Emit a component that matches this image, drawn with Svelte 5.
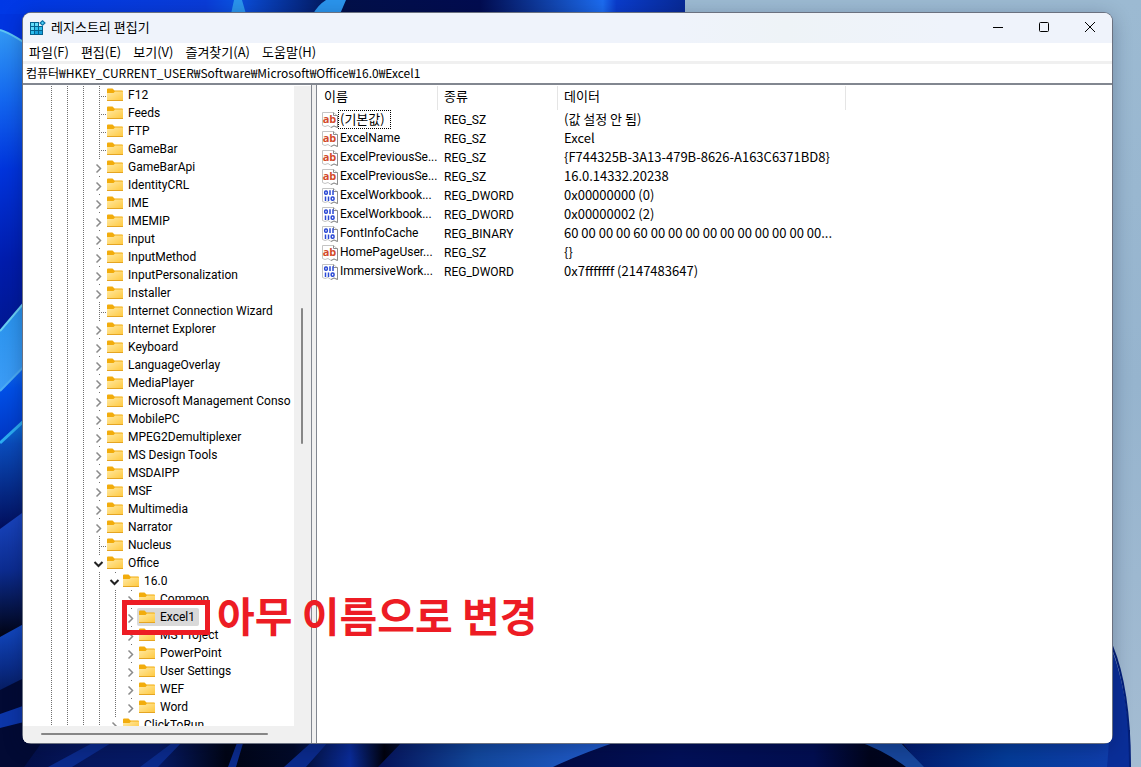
<script lang="ts">
  type Kind = 'leaf' | 'closed' | 'open';
  type TreeKey = { name: string; level: number; kind: Kind; selected?: boolean };
  type Value = { name: string; type: string; data: string };

  const key = (name: string, level = 0, kind: Kind = 'closed', selected = false): TreeKey => ({ name, level, kind, selected });

  const keys: TreeKey[] = [
    key('F12', 0, 'leaf'),
    key('Feeds', 0, 'leaf'),
    key('FTP', 0, 'leaf'),
    key('GameBar', 0, 'leaf'),
    key('GameBarApi'),
    key('IdentityCRL'),
    key('IME'),
    key('IMEMIP'),
    key('input'),
    key('InputMethod'),
    key('InputPersonalization'),
    key('Installer'),
    key('Internet Connection Wizard', 0, 'leaf'),
    key('Internet Explorer'),
    key('Keyboard'),
    key('LanguageOverlay'),
    key('MediaPlayer'),
    key('Microsoft Management Conso'),
    key('MobilePC'),
    key('MPEG2Demultiplexer'),
    key('MS Design Tools'),
    key('MSDAIPP'),
    key('MSF'),
    key('Multimedia'),
    key('Narrator'),
    key('Nucleus', 0, 'leaf'),
    key('Office', 0, 'open'),
    key('16.0', 1, 'open'),
    key('Common', 2),
    key('Excel1', 2, 'closed', true),
    key('MS Project', 2),
    key('PowerPoint', 2),
    key('User Settings', 2),
    key('WEF', 2),
    key('Word', 2),
    key('ClickToRun', 1)
  ];

  const values: Value[] = [
    { name: '(기본값)', type: 'REG_SZ', data: '(값 설정 안 됨)' },
    { name: 'ExcelName', type: 'REG_SZ', data: 'Excel' },
    { name: 'ExcelPreviousSe...', type: 'REG_SZ', data: '{F744325B-3A13-479B-8626-A163C6371BD8}' },
    { name: 'ExcelPreviousSe...', type: 'REG_SZ', data: '16.0.14332.20238' },
    { name: 'ExcelWorkbook...', type: 'REG_DWORD', data: '0x00000000 (0)' },
    { name: 'ExcelWorkbook...', type: 'REG_DWORD', data: '0x00000002 (2)' },
    { name: 'FontInfoCache', type: 'REG_BINARY', data: '60 00 00 00 60 00 00 00 00 00 00 00 00 00 00...' },
    { name: 'HomePageUser...', type: 'REG_SZ', data: '{}' },
    { name: 'ImmersiveWork...', type: 'REG_DWORD', data: '0x7fffffff (2147483647)' }
  ];

  const menus = ['파일(F)', '편집(E)', '보기(V)', '즐겨찾기(A)', '도움말(H)'];
  const hangul = (text: string) => /[가-힣]/.test(text);
  let path = $state('컴퓨터₩HKEY_CURRENT_USER₩Software₩Microsoft₩Office₩16.0₩Excel1');
</script>

<div class="desktop">
  <svg class="wallpaper" viewBox="0 0 1141 767" preserveAspectRatio="none" aria-hidden="true">
    <defs>
      <linearGradient id="sky" x1="0" y1="0" x2="0" y2="1">
        <stop offset="0" stop-color="#9cbad2" /><stop offset="0.5" stop-color="#96b4ce" /><stop offset="1" stop-color="#a4bcd2" />
      </linearGradient>
      <linearGradient id="top" x1="0" y1="0" x2="1" y2="0">
        <stop offset="0" stop-color="#0038e6" /><stop offset="0.3" stop-color="#0a3cd8" /><stop offset="0.34" stop-color="#0a50e0" /><stop offset="0.36" stop-color="#0a4ad2" />
        <stop offset="0.5" stop-color="#02104a" /><stop offset="0.7" stop-color="#020c50" /><stop offset="0.88" stop-color="#1c6cf0" /><stop offset="0.9" stop-color="#0a3ccc" /><stop offset="1" stop-color="#082a96" />
      </linearGradient>
      <linearGradient id="petal" x1="0" y1="0" x2="0" y2="1">
        <stop offset="0" stop-color="#3298f4" /><stop offset="0.22" stop-color="#1468f0" /><stop offset="0.45" stop-color="#0034dc" /><stop offset="0.75" stop-color="#001cac" /><stop offset="1" stop-color="#001890" />
      </linearGradient>
      <linearGradient id="fold" x1="0" y1="0" x2="0" y2="1">
        <stop offset="0" stop-color="#2490ea" /><stop offset="1" stop-color="#3c9cf6" />
      </linearGradient>
      <linearGradient id="fold2" x1="0" y1="0" x2="0" y2="1">
        <stop offset="0" stop-color="#1c7ef0" /><stop offset="0.4" stop-color="#0050e8" /><stop offset="1" stop-color="#0034c0" />
      </linearGradient>
      <linearGradient id="fold3" x1="0" y1="0" x2="0" y2="1">
        <stop offset="0" stop-color="#0c8cf0" /><stop offset="0.3" stop-color="#0a4cbc" /><stop offset="1" stop-color="#020c58" />
      </linearGradient>
      <linearGradient id="fold4" x1="0" y1="0" x2="0" y2="1">
        <stop offset="0" stop-color="#1c4ccc" /><stop offset="0.5" stop-color="#0c2c90" /><stop offset="1" stop-color="#01020e" />
      </linearGradient>
      <linearGradient id="fold5" x1="0" y1="0" x2="0" y2="1">
        <stop offset="0" stop-color="#1450d0" /><stop offset="0.5" stop-color="#0a2c88" /><stop offset="1" stop-color="#020a30" />
      </linearGradient>
      <linearGradient id="floor" x1="0" y1="0" x2="1" y2="0">
        <stop offset="0" stop-color="#020c40" /><stop offset="0.08" stop-color="#061860" /><stop offset="0.14" stop-color="#061a66" /><stop offset="0.2" stop-color="#010514" />
        <stop offset="0.26" stop-color="#020a28" /><stop offset="0.31" stop-color="#0a2c98" /><stop offset="0.34" stop-color="#01020c" /><stop offset="0.4" stop-color="#0c2c90" />
        <stop offset="0.42" stop-color="#020838" /><stop offset="0.6" stop-color="#021058" /><stop offset="0.72" stop-color="#020e50" /><stop offset="0.77" stop-color="#01041a" /><stop offset="1" stop-color="#020c48" />
      </linearGradient>
      <linearGradient id="band" x1="0" y1="0" x2="1" y2="0">
        <stop offset="0" stop-color="#051258" /><stop offset="0.4" stop-color="#12489c" /><stop offset="1" stop-color="#2460d4" />
      </linearGradient>
      <linearGradient id="right" x1="0" y1="0" x2="1" y2="0">
        <stop offset="0" stop-color="#021a6c" /><stop offset="0.5" stop-color="#043c98" /><stop offset="1" stop-color="#103eac" />
      </linearGradient>
    </defs>
    <rect width="1141" height="767" fill="url(#sky)" />
    <rect width="685" height="40" fill="url(#top)" />
    <path d="M234 0 L231 14 L246 14 L242 0Z M326 0 Q318 5 313 14 L340 14 L346 0Z" fill="#2a94ec" />
    <path d="M0 14 H40 V767 H0Z" fill="#0034e0" />
    <path d="M0 30 Q14 34 40 54 V340 H0Z" fill="url(#petal)" />
    <path d="M0 30 Q14 34 40 54" stroke="#5cc4f4" stroke-width="2" fill="none" />
    <path d="M0 331 L40 284 V366 L0 392Z" fill="url(#fold)" />
    <path d="M0 331 L40 284" stroke="#6ad0f4" stroke-width="2" />
    <path d="M0 391 L40 350 V410 L0 446Z" fill="url(#fold2)" />
    <path d="M0 391 L40 350" stroke="#4cacf4" stroke-width="2" />
    <path d="M0 443 L40 406 V510 L0 532Z" fill="url(#fold3)" />
    <path d="M0 443 L40 406" stroke="#2cacf0" stroke-width="3" />
    <path d="M0 529 L40 500 V640 H0Z" fill="url(#fold4)" />
    <rect y="730" width="1130" height="37" fill="url(#floor)" />
    <path d="M0 637 L40 615 V720 H0Z" fill="url(#fold5)" />
    <path d="M0 690 L40 670 V745 L24 767 H0Z" fill="#020a34" />
    <path d="M0 714 L40 700 V718 L0 728Z" fill="#0c36a8" />
    <path d="M48 767 L98 740 H116 L72 767Z M140 767 L176 740 H184 L158 767Z M228 767 L238 740 H244 L236 767Z M284 767 L314 740 H330 L306 767Z" fill="#0b2b8c" />
    <path d="M553 767 Q580 754 622 740 H404 L378 767Z" fill="url(#band)" />
    <path d="M900 740 H1114 V767 H922Z" fill="url(#right)" />
    <path d="M854 740 L898 740 L924 767 L906 767 Q884 750 854 740Z" fill="#17479c" />
    <path d="M1108 640 Q1130 690 1130 767 H1107 Q1112 720 1108 640Z" fill="#0a2e98" />
    <path d="M1112 646 Q1130 690 1130 767" stroke="#04207a" stroke-width="2" fill="none" />
  </svg>

  <main class="window">
    <header class="titlebar">
      <svg class="app-icon" viewBox="0 0 16 16" aria-hidden="true">
        <path d="M0 2h13v13H0z" fill="#05628f" />
        <path d="M1 3h3v3H1z M5 3h3v3H5z M1 7h3v3H1z" fill="#62dcfa" />
        <path d="M5 7h3v3H5z M9 7h3v3H9z M1 11h3v3H1z" fill="#30c0ee" />
        <path d="M5 11h3v3H5z M9 11h3v3H9z" fill="#16a0dc" />
        <path d="M9 0h7v6H9z" fill="#eff3fb" />
        <path d="M12.500 0 15.800 3 12.500 6 9.200 3z" fill="#0b6fa4" />
        <path d="M12.500 1.500 14 3 12.500 4.500 11 3z" fill="#4cd0f6" />
      </svg>
      <h1>레지스트리 편집기</h1>
      <div class="controls">
        <button aria-label="최소화"><svg viewBox="0 0 10 10"><path d="M0 5.500H10" /></svg></button>
        <button aria-label="최대화"><svg viewBox="0 0 10 10"><rect x="0.500" y="0.500" width="9" height="9" rx="1" /></svg></button>
        <button aria-label="닫기"><svg viewBox="0 0 10 10"><path d="M0 0 10 10M10 0 0 10" /></svg></button>
      </div>
    </header>

    <nav class="menubar">
      {#each menus as menu}
        <button>{menu}</button>
      {/each}
    </nav>

    <input class="address" aria-label="주소" bind:value={path} spellcheck="false" />

    <div class="panes">
      <section class="tree-pane">
        <div class="tree-row">
          <ul class="tree">
            {#each keys as item}
              <li>
                {#each { length: 3 + item.level } as _}
                  <span class="cell guide"></span>
                {/each}
                {#if item.kind === 'leaf'}
                  <span class="cell guide branch"></span>
                {:else}
                  <button class="cell toggle" class:open={item.kind === 'open'} aria-label={item.name + ' 확장'}>
                    <svg viewBox="0 0 16 18">
                      <path d={item.kind === 'open' ? 'M3.500 8 7.500 12 11.500 8' : 'M5.500 6.500 9.500 10.500 5.500 14.500'} />
                    </svg>
                  </button>
                {/if}
                <button class="key" class:selected={item.selected}>
                  <svg viewBox="0 0 16 14" aria-hidden="true">
                    <path d="M0 1.500Q0 0.500 1 0.500H5.500L7.500 2.500H15Q16 2.500 16 3.500V12H0Z" fill="#f2ac0c" />
                    <path d="M0 5H6.500L8 3.500H16V12Q16 13 15 13H1Q0 13 0 12Z" fill="url(#folder)" />
                    <path d="M0 12.500H16" stroke="#e5a522" />
                  </svg>
                  <span>{item.name}</span>
                </button>
              </li>
            {/each}
          </ul>
          <div class="vscroll"><i></i></div>
        </div>
        <div class="hscroll"><i></i></div>
      </section>

      <section class="list-pane">
        <table>
          <colgroup><col class="c-name" /><col class="c-type" /><col class="c-data" /><col /></colgroup>
          <thead>
            <tr><th>이름</th><th>종류</th><th>데이터</th><td></td></tr>
          </thead>
          <tbody>
            {#each values as value, i}
              <tr>
                <td class="name">
                  <div>
                    <svg viewBox="0 0 16 16" aria-hidden="true">
                      <path d="M0.500 0.500H11.500L15.500 4V15.500L12 14 9 15.500 6 13.500 3 14.500 0.500 13.500Z" fill="#fff" stroke="#c4c4c4" />
                      <path d="M11.500 0.500V3.500H15.500V15.500L12 14 9 15.500" fill="none" stroke="#8e8e8e" />
                      {#if value.type === 'REG_SZ'}
                        <text x="7.500" y="11" text-anchor="middle" class="ab">ab</text>
                      {:else}
                        <g fill="none" stroke="#2a48d4" stroke-width="1.500">
                          <rect x="2.700" y="3" width="2.600" height="3.200" rx="1" />
                          <path d="M8 2.200V7M11 2.200V7M3.500 8.500V13M6.500 8.500V13" />
                          <rect x="9.200" y="9" width="2.800" height="3.200" rx="1" />
                        </g>
                      {/if}
                    </svg>
                    <span class:wide={hangul(value.name)} class:focused={i === 0}>{value.name}</span>
                  </div>
                </td>
                <td>{value.type}</td>
                <td class="wide">{value.data}</td>
                <td></td>
              </tr>
            {/each}
          </tbody>
        </table>
      </section>
    </div>

    <div class="callout">
      <span class="frame"></span>
      <strong>아무 이름으로 변경</strong>
    </div>
  </main>

  <svg class="defs" aria-hidden="true">
    <linearGradient id="folder" x1="0" y1="0" x2="1" y2="1">
      <stop offset="0" stop-color="#ffe9a4" /><stop offset="1" stop-color="#ffc83c" />
    </linearGradient>
  </svg>
</div>

<style>
  :global(body) {
    margin: 0;
  }

  .desktop {
    position: relative;
    display: flex;
    box-sizing: border-box;
    height: 100vh;
    padding: 13px 29px 24px 23px;
    overflow: hidden;
    font-family: 'Noto Sans CJK KR', sans-serif;
    font-size: 13px;
    line-height: 18px;
    color: #000;
  }

  .wallpaper {
    position: absolute;
    inset: 0;
    width: 100%;
    height: 100%;
  }

  .defs {
    position: absolute;
    width: 0;
    height: 0;
  }

  .window {
    position: relative;
    display: flex;
    flex: 1;
    flex-direction: column;
    min-width: 0;
    border-radius: 8px;
    background: #fff;
    box-shadow: 0 0 0 1px #6b7180, 0 4px 20px rgba(0, 10, 40, 0.3);
  }

  button {
    padding: 0;
    border: 0;
    background: none;
    color: inherit;
    font: inherit;
    white-space: nowrap;
  }

  .titlebar {
    display: flex;
    align-items: center;
    height: 30px;
    padding-left: 7px;
    border-radius: 8px 8px 0 0;
    background: linear-gradient(90deg, #eff3fb 0 60%, #eef3f7 70%, #eff3fb 85%);
  }

  .app-icon {
    width: 16px;
    height: 16px;
  }

  h1 {
    flex: 1;
    margin: 0 0 2px 5px;
    font-size: 13px;
    font-weight: 400;
  }

  .controls {
    display: flex;
    margin: 0 -1px 2px 0;
  }

  .controls button {
    display: grid;
    place-items: center;
    width: 46px;
    height: 28px;
  }

  .controls svg {
    width: 10px;
    height: 10px;
    overflow: visible;
    fill: none;
    stroke: #000;
  }

  .menubar {
    display: flex;
    gap: 12px;
    height: 18px;
    padding: 0 6px;
  }

  .address {
    box-sizing: border-box;
    height: 24px;
    padding: 0 3px 2px;
    border: 0;
    border-top: 3px solid #f0f0f0;
    border-bottom: 2px solid #828790;
    background: #fff;
    color: inherit;
    font: inherit;
    font-size: 12px;
    outline: 0;
  }

  .panes {
    display: flex;
    flex: 1;
    gap: 4px;
    min-height: 0;
    border-radius: 0 0 6px 6px;
    overflow: hidden;
    background: #f0f0f0;
    font-family: Roboto, 'Noto Sans CJK KR', sans-serif;
    font-size: 12px;
  }

  .tree-pane {
    display: flex;
    flex-direction: column;
    flex: none;
    width: 289px;
    box-sizing: border-box;
    padding-top: 1px;
    border-right: 1px solid #828790;
    background: #fff;
  }

  .tree-row {
    display: flex;
    flex: 1;
    min-height: 0;
  }

  .tree {
    flex: 1;
    min-width: 0;
    margin: 0;
    padding: 0 0 0 20px;
    overflow: hidden;
    list-style: none;
  }

  .tree li {
    display: flex;
    height: 18px;
  }

  .cell {
    position: relative;
    flex: none;
    width: 16px;
    height: 18px;
  }

  .guide {
    background: repeating-linear-gradient(#707070 0 1px, transparent 1px 2px) 8px 0 / 1px 100% no-repeat;
  }

  .branch {
    background:
      repeating-linear-gradient(#707070 0 1px, transparent 1px 2px) 8px 0 / 1px 100% no-repeat,
      repeating-linear-gradient(90deg, #707070 0 1px, transparent 1px 2px) 8px 10px / 8px 1px no-repeat;
  }

  .toggle {
    background: linear-gradient(#707070, #707070) 8px 0 / 1px 1px no-repeat;
  }

  .toggle svg {
    display: block;
    width: 16px;
    height: 18px;
    fill: none;
    stroke: #8a8a8a;
    stroke-width: 1.500;
  }

  .toggle.open svg {
    stroke: #222;
    stroke-width: 2;
  }

  .key {
    display: flex;
    gap: 5px;
    align-items: center;
    height: 18px;
    margin-left: -2px;
    padding: 0 4px 0 2px;
    border-radius: 2px;
  }

  .key.selected {
    background: #d9d9d9;
  }

  .key svg {
    flex: none;
    width: 16px;
    height: 14px;
  }

  .vscroll {
    flex: none;
    width: 17px;
    padding-top: 222px;
    box-sizing: border-box;
    background: #f0f0f0;
  }

  .vscroll i {
    display: block;
    width: 2px;
    height: 136px;
    margin-left: 7px;
    border-radius: 1px;
    background: #868686;
  }

  .hscroll {
    flex: none;
    height: 17px;
    box-sizing: border-box;
    padding: 7px 43px 0 18px;
    background: #f0f0f0;
  }

  .hscroll i {
    display: block;
    height: 2px;
    border-radius: 1px;
    background: #868686;
  }

  .list-pane {
    flex: 1;
    min-width: 0;
    padding-top: 1px;
    border-left: 1px solid #828790;
    background: #fff;
  }

  table {
    width: 100%;
    table-layout: fixed;
    border-collapse: collapse;
  }

  .c-name {
    width: 121px;
  }

  .c-type {
    width: 120px;
  }

  .c-data {
    width: 288px;
  }

  th,
  td {
    box-sizing: border-box;
    height: 19px;
    padding: 1px 6px 0;
    font-weight: 400;
    line-height: 18px;
    text-align: left;
    vertical-align: top;
    white-space: nowrap;
  }

  th {
    height: 24px;
    padding: 1px 7px 0;
    box-shadow: inset -1px 0 #e5e5e5;
    font-family: 'Noto Sans CJK KR', sans-serif;
    font-size: 13px;
  }

  th + th {
    padding-left: 6px;
  }

  .wide {
    padding-top: 0;
    font-family: 'Noto Sans CJK KR', sans-serif;
    font-size: 13px;
  }

  .name {
    padding: 0 3px 0 5px;
  }

  .name div {
    display: flex;
    align-items: center;
    height: 19px;
  }

  .name svg {
    flex: none;
    width: 16px;
    height: 16px;
    overflow: visible;
  }

  .name span {
    padding: 0 2px;
    line-height: 19px;
  }

  .name .focused {
    height: 17px;
    padding: 0 5px 0 1px;
    border: 1px dotted #000;
    line-height: 15px;
  }

  .ab {
    fill: #d2492a;
    font: 700 11px 'Open Sans', sans-serif;
  }

  .callout {
    position: absolute;
    top: 587px;
    left: 99px;
    display: flex;
    gap: 7px;
    align-items: flex-start;
    height: 35px;
    color: #ed1c24;
    pointer-events: none;
  }

  .frame {
    box-sizing: border-box;
    width: 88px;
    height: 35px;
    border: 5px solid #ed1c24;
  }

  .callout strong {
    font-size: 41px;
    font-weight: 700;
    line-height: 28px;
    white-space: nowrap;
  }
</style>
